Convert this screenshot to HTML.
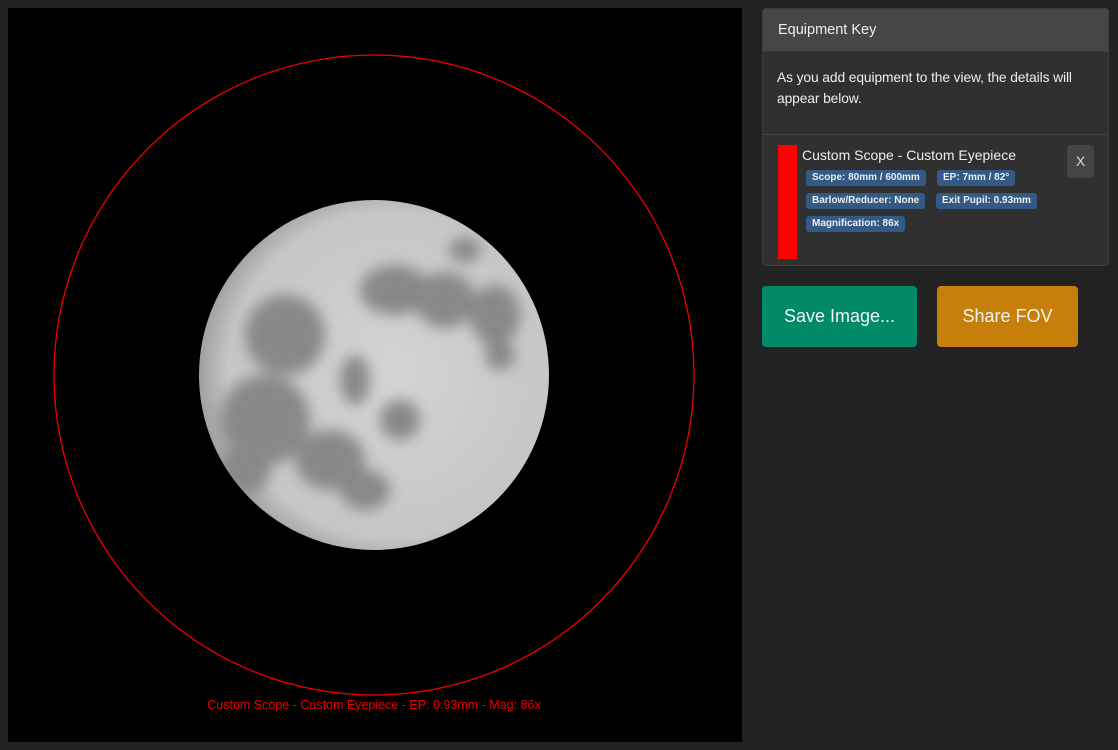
<!DOCTYPE html>
<html><head><style>
body{margin:0;width:1118px;height:750px;background:#222;font-family:"Liberation Sans",sans-serif;position:relative;overflow:hidden}
.canvas{position:absolute;left:8px;top:8px;width:734px;height:734px;background:#000}
.panel{position:absolute;left:762px;top:8px;width:347px;height:258px;background:#303030;border:1px solid #3e3e3e;border-radius:4px;box-sizing:border-box;color:#eee}
.hd{height:42px;background:#464646;border-bottom:1px solid #3a3a3a;font-size:14.5px;line-height:42px;padding-left:15px}
.bd{padding:15px 14px;font-size:13.8px;line-height:21px;height:52px;border-bottom:1px solid #444;letter-spacing:-0.1px}
.item{position:relative;height:120px}
.bar{position:absolute;left:15px;top:10px;width:19px;height:114px;background:#f00}
.title{position:absolute;left:39px;top:12px;font-size:14px}
.tag{position:absolute;background:#335a85;color:#eee;font-size:10px;font-weight:bold;padding:2px 6px;border-radius:3px;line-height:12px}
.x{position:absolute;right:14px;top:10px;width:27px;height:33px;background:#444;border-radius:3px;font-size:14px;text-align:center;line-height:33px;color:#ddd}
.btn{position:absolute;top:286px;height:61px;border-radius:4px;color:#f2f2f2;font-size:18px;text-align:center;line-height:61px}
</style></head><body>
<div class="canvas">
<svg width="734" height="734" viewBox="8 8 734 734">
<defs>
<radialGradient id="mg" cx="0.55" cy="0.5" r="0.55"><stop offset="0" stop-color="#d4d4d4"/><stop offset="0.85" stop-color="#c6c6c6"/><stop offset="1" stop-color="#a0a0a0"/></radialGradient>
<filter id="bl"><feGaussianBlur stdDeviation="7"/></filter>
<clipPath id="cp"><circle cx="374" cy="375" r="175"/></clipPath>
</defs>
<circle cx="374" cy="375" r="320" fill="none" stroke="#e00" stroke-width="1.3"/>
<circle cx="374" cy="375" r="175" fill="url(#mg)"/>
<g clip-path="url(#cp)" fill="#888" filter="url(#bl)">
<ellipse cx="465" cy="250" rx="16" ry="12"/>
<ellipse cx="395" cy="290" rx="35" ry="25"/>
<ellipse cx="445" cy="300" rx="30" ry="28"/>
<ellipse cx="495" cy="315" rx="25" ry="30"/>
<ellipse cx="500" cy="355" rx="15" ry="15"/>
<ellipse cx="285" cy="335" rx="40" ry="40"/>
<ellipse cx="265" cy="420" rx="45" ry="45"/>
<ellipse cx="245" cy="470" rx="25" ry="25"/>
<ellipse cx="330" cy="460" rx="35" ry="30"/>
<ellipse cx="365" cy="490" rx="25" ry="20"/>
<ellipse cx="355" cy="380" rx="15" ry="25"/>
<ellipse cx="400" cy="420" rx="20" ry="20"/>
</g>
<text x="374" y="709" fill="#e00" font-size="12.5" text-anchor="middle" font-family="Liberation Sans">Custom Scope - Custom Eyepiece - EP: 0.93mm - Mag: 86x</text>
</svg>
</div>
<div class="panel">
<div class="hd">Equipment Key</div>
<div class="bd">As you add equipment to the view, the details will appear below.</div>
<div class="item">
<div class="bar"></div>
<div class="title">Custom Scope - Custom Eyepiece</div>
<div class="tag" style="left:43px;top:35px">Scope: 80mm / 600mm</div>
<div class="tag" style="left:174px;top:35px">EP: 7mm / 82°</div>
<div class="tag" style="left:43px;top:58px">Barlow/Reducer: None</div>
<div class="tag" style="left:173px;top:58px">Exit Pupil: 0.93mm</div>
<div class="tag" style="left:43px;top:81px">Magnification: 86x</div>
<div class="x">X</div>
</div>
</div>
<div class="btn" style="left:762px;width:155px;background:#008a65">Save Image...</div>
<div class="btn" style="left:937px;width:141px;background:#c67f0a">Share FOV</div>
</body></html>
